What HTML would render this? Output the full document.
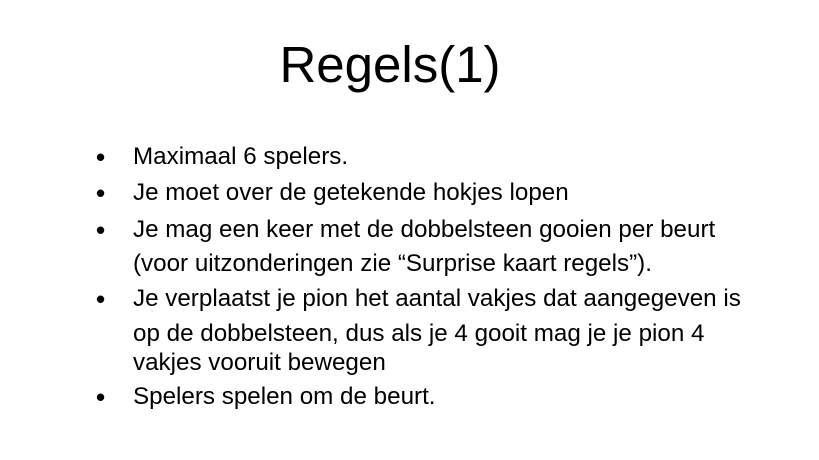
<html><head><style>
body{margin:0;width:819px;height:460px;background:#fff;position:relative;overflow:hidden;font-family:"Liberation Sans",Arial,sans-serif;color:#000}
.t{position:absolute;left:0;width:780px;text-align:center;top:39px;font-size:51px;line-height:51px}
.l{position:absolute;left:133px;font-size:24.2px;line-height:24px;white-space:nowrap}
.b{position:absolute;left:96px;font-size:26px;line-height:24px;font-weight:bold}
</style></head><body>
<div class="t">Regels(1)</div>
<div class="b" style="top:145px">•</div><div class="l" style="top:145px">Maximaal 6 spelers.</div>
<div class="b" style="top:181px">•</div><div class="l" style="top:181px">Je moet over de getekende hokjes lopen</div>
<div class="b" style="top:218px">•</div><div class="l" style="top:218px">Je mag een keer met de dobbelsteen gooien per beurt</div>
<div class="l" style="top:252px">(voor uitzonderingen zie “Surprise kaart regels”).</div>
<div class="b" style="top:287px">•</div><div class="l" style="top:287px">Je verplaatst je pion het aantal vakjes dat aangegeven is</div>
<div class="l" style="top:322px">op de dobbelsteen, dus als je 4 gooit mag je je pion 4</div>
<div class="l" style="top:351px">vakjes vooruit bewegen</div>
<div class="b" style="top:385px">•</div><div class="l" style="top:385px">Spelers spelen om de beurt.</div>
</body></html>
